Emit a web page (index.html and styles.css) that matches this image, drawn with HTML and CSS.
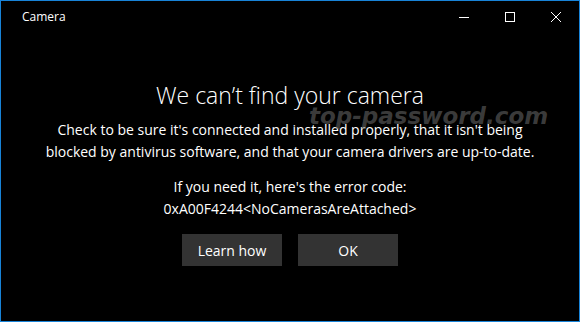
FILE: index.html
```html
<!DOCTYPE html>
<html lang="en">
  <head>
    <meta charset="UTF-8" />
    <title>Camera</title>
    <link rel="stylesheet" href="styles.css">
  </head>
  <body>
    <div class="window">
      <header class="titlebar">
        <span class="apptitle">Camera</span>
        <div class="controls">
          <button class="ctrl" aria-label="Minimize">
            <svg width="10" height="10" viewBox="0 0 10 10"><path d="M0 5.5h10" stroke="#fff" stroke-width="1"/></svg>
          </button>
          <button class="ctrl" aria-label="Maximize">
            <svg width="10" height="10" viewBox="0 0 10 10"><rect x="0.5" y="0.5" width="9" height="9" fill="none" stroke="#fff" stroke-width="1"/></svg>
          </button>
          <button class="ctrl" aria-label="Close">
            <svg width="10" height="10" viewBox="0 0 10 10"><path d="M0 0L10 10M10 0L0 10" stroke="#fff" stroke-width="1"/></svg>
          </button>
        </div>
      </header>

      <main class="content">
        <h1 class="heading">We can’t find your camera</h1>
        <p class="message">Check to be sure it's connected and installed properly, that it isn't being blocked by antivirus software, and that your camera drivers are up-to-date.</p>
        <p class="message code">If you need it, here's the error code:<br>0xA00F4244&lt;NoCamerasAreAttached&gt;</p>
        <div class="actions">
          <button class="knap">Learn how</button>
          <button class="knap">OK</button>
        </div>
      </main>

      <div class="watermark">top-password.com</div>
    </div>
  </body>
</html>
```

FILE: styles.css
```css
body {
  margin: 0;
  padding: 0;
  background: #000;
}

.window {
  position: relative;
  width: 580px;
  height: 322px;
  box-sizing: border-box;
  border: 1px solid #1883d7;
  background: #000;
  color: #fff;
  font-family: "Open Sans", "Noto Sans", sans-serif;
  overflow: hidden;
}

.titlebar {
  display: flex;
  justify-content: space-between;
  align-items: center;
  height: 31px;
}

.apptitle {
  padding-left: 21px;
  font-size: 12px;
  padding-bottom: 1px;
}

.controls {
  display: flex;
  height: 100%;
}

.ctrl {
  width: 46px;
  height: 100%;
  border: none;
  background: transparent;
  padding: 0;
  display: flex;
  align-items: center;
  justify-content: center;
}

.content {
  display: flex;
  flex-direction: column;
  align-items: center;
  text-align: center;
  padding-top: 47px;
}

.heading {
  margin: 0;
  font-size: 23px;
  font-weight: 300;
  line-height: 32px;
}

.message {
  margin: 8px 0 0;
  font-size: 14px;
  line-height: 22px;
  width: 490px;
}

.code {
  margin-top: 13px;
}

.actions {
  display: flex;
  gap: 16px;
  margin-top: 14px;
}

.knap {
  width: 100px;
  height: 32px;
  border: none;
  background: #333;
  color: #fff;
  font-family: "Open Sans", "Noto Sans", sans-serif;
  font-size: 14px;
  padding: 0;
}

/* watermark over the text */
.watermark {
  position: absolute;
  left: 308px;
  top: 101px;
  font-family: "DejaVu Sans", sans-serif;
  font-style: italic;
  font-weight: 600;
  font-size: 23px;
  line-height: 28px;
  color: rgba(110, 110, 110, 0.55);
  pointer-events: none;
}
```
